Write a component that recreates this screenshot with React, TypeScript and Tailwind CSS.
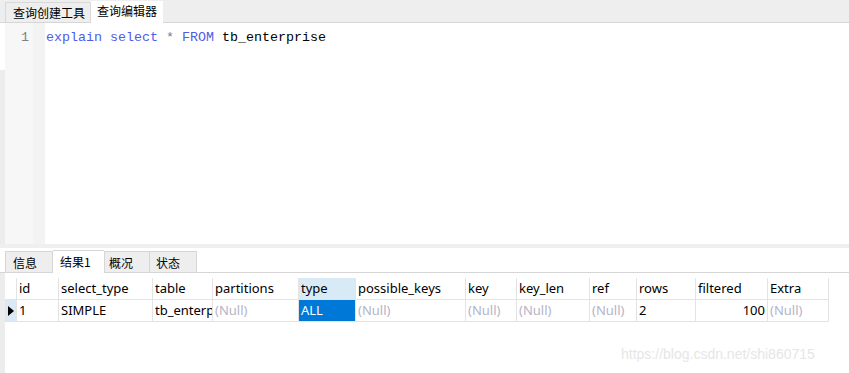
import React from "react";

const cjk = { fontFamily: '"Microsoft YaHei", "Noto Sans CJK SC", sans-serif' };
const ui = { fontFamily: '"Segoe UI", "Noto Sans", "Noto Sans CJK SC", sans-serif' };
const mono = { fontFamily: '"Liberation Mono", monospace' };

const columns = [
  { name: "id", w: 42 },
  { name: "select_type", w: 94 },
  { name: "table", w: 60 },
  { name: "partitions", w: 86 },
  { name: "type", w: 57 },
  { name: "possible_keys", w: 110 },
  { name: "key", w: 51 },
  { name: "key_len", w: 73 },
  { name: "ref", w: 47 },
  { name: "rows", w: 59 },
  { name: "filtered", w: 72 },
  { name: "Extra", w: 61 },
];

const row: { v: string; nul?: boolean; right?: boolean; sel?: boolean }[] = [
  { v: "1" },
  { v: "SIMPLE" },
  { v: "tb_enterprise" },
  { v: "(Null)", nul: true },
  { v: "ALL", sel: true },
  { v: "(Null)", nul: true },
  { v: "(Null)", nul: true },
  { v: "(Null)", nul: true },
  { v: "(Null)", nul: true },
  { v: "2" },
  { v: "100", right: true },
  { v: "(Null)", nul: true },
];

export default function App() {
  return (
    <div className="relative w-[849px] h-[373px] bg-white overflow-hidden flex flex-col">
      {/* top tabs */}
      <div className="h-[23px] bg-[#eeeeee] border-b border-[#d6d6d6] flex items-end pl-[5px] shrink-0" style={cjk}>
        <div className="h-[20px] w-[86px] pl-[7px] border border-b-0 border-[#d9d9d9] bg-[#eeeeee] text-[12px] leading-[19px] text-black">
          查询创建工具
        </div>
        <div className="h-[22px] px-[6px] bg-white text-[12px] leading-[20px] text-black -mb-px">查询编辑器</div>
      </div>

      {/* editor */}
      <div className="flex h-[221px] shrink-0">
        <div className="w-[5px] flex flex-col">
          <div className="h-[47px] bg-white" />
          <div className="flex-1 bg-[#ececec]" />
        </div>
        <div className="w-[28px] bg-[#f7f7f7] text-right pr-[4px] pt-[7px] text-[13.33px] leading-[16px] text-[#808080]" style={mono}>
          1
        </div>
        <div className="w-[12px] bg-[#f3f3f3]" />
        <div className="flex-1 pl-[1px] pt-[7px] text-[13.33px] leading-[16px] whitespace-pre" style={mono}>
          <span className="text-[#4f5ce8]">explain select </span>
          <span className="text-[#7a7a7a]">*</span>
          <span className="text-[#4f5ce8]"> FROM </span>
          <span className="text-black">tb_enterprise</span>
        </div>
      </div>

      {/* splitter */}
      <div className="h-[4px] bg-[#efefef] shrink-0" />
      <div className="h-[2px] shrink-0" />

      {/* bottom tabs */}
      <div className="h-[23px] flex items-end pl-[5px] border-b border-[#d6d6d6] shrink-0" style={cjk}>
        <div className="h-[21px] w-[48px] pl-[7px] border border-b-0 border-[#d6d6d6] bg-[#eeeeee] text-[12px] leading-[21px]">信息</div>
        <div className="h-[23px] w-[51px] pl-[7px] border-t border-[#d6d6d6] bg-white text-[12px] leading-[21px] -mb-px">结果1</div>
        <div className="h-[21px] w-[46px] pl-[4px] border border-b-0 border-[#d6d6d6] bg-[#eeeeee] text-[12px] leading-[21px]">概况</div>
        <div className="h-[21px] w-[47px] pl-[6px] border border-b-0 border-l-0 border-[#d6d6d6] bg-[#eeeeee] text-[12px] leading-[21px]">状态</div>
      </div>

      {/* grid */}
      <div className="flex flex-1">
        <div className="w-[5px] bg-[#ececec]" />
        <div className="pt-[5px] text-[13px]" style={ui}>
          <div className="flex h-[22px] border-b border-[#e3e3e3]">
            <div className="w-[12px] border-r border-[#e3e3e3]" />
            {columns.map((c) => (
              <div
                key={c.name}
                className={`border-r border-[#e3e3e3] pl-[2px] leading-[21px] text-black overflow-hidden whitespace-nowrap ${c.name === "type" ? "bg-[#d9eaf7]" : ""}`}
                style={{ width: c.w }}
              >
                {c.name}
              </div>
            ))}
          </div>
          <div className="flex h-[22px] border-b border-[#e3e3e3]">
            <div className="w-[12px] border-r border-[#e3e3e3] bg-[#dbe9f6] flex items-center justify-center">
              <svg width="6" height="10" viewBox="0 0 6 10">
                <path d="M0 0 L6 5 L0 10 Z" fill="#000" />
              </svg>
            </div>
            {row.map((c, i) => (
              <div
                key={i}
                className={`border-r border-[#e3e3e3] px-[2px] leading-[21px] overflow-hidden whitespace-nowrap ${c.sel ? "bg-[#0078d7] text-white" : c.nul ? "text-[#b4b4c8]" : "text-black"} ${c.right ? "text-right" : ""}`}
                style={{ width: columns[i].w }}
              >
                {c.v}
              </div>
            ))}
          </div>
        </div>
      </div>

      {/* watermark */}
      <div className="absolute left-[621px] top-[344px] text-[14px] text-[#e6e6e6]" style={{ fontFamily: '"Liberation Sans", Arial, sans-serif' }}>
        https://blog.csdn.net/shi860715
      </div>
    </div>
  );
}
